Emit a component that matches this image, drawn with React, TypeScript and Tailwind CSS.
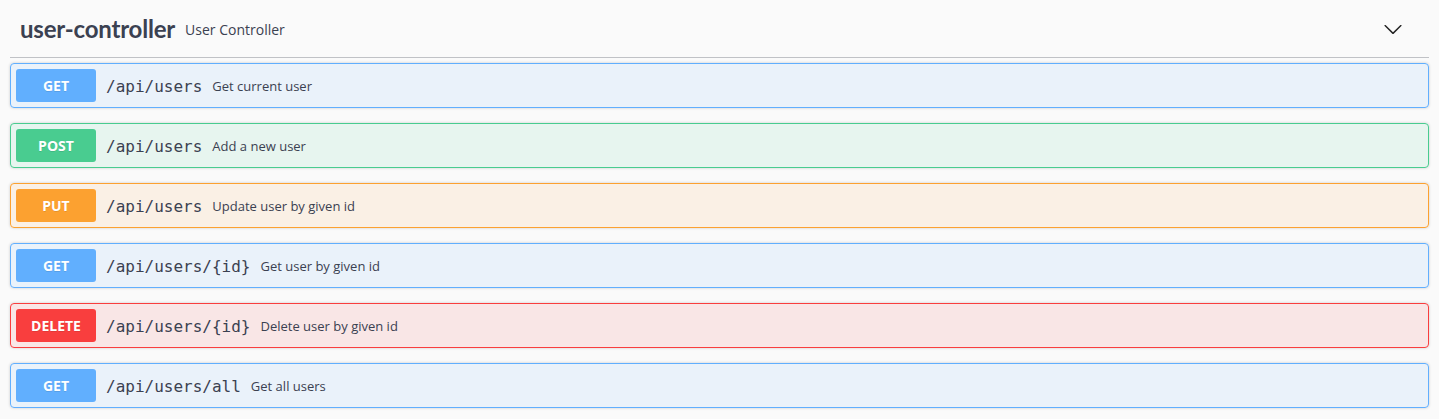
const ops = [
  { method: "GET", path: "/api/users", desc: "Get current user" },
  { method: "POST", path: "/api/users", desc: "Add a new user" },
  { method: "PUT", path: "/api/users", desc: "Update user by given id" },
  { method: "GET", path: "/api/users/{id}", desc: "Get user by given id" },
  { method: "DELETE", path: "/api/users/{id}", desc: "Delete user by given id" },
  { method: "GET", path: "/api/users/all", desc: "Get all users" },
];

const styles: Record<string, { row: string; badge: string }> = {
  GET: {
    row: "border-[#61affe] bg-[rgba(97,175,254,0.1)]",
    badge: "bg-[#61affe]",
  },
  POST: {
    row: "border-[#49cc90] bg-[rgba(73,204,144,0.1)]",
    badge: "bg-[#49cc90]",
  },
  PUT: {
    row: "border-[#fca130] bg-[rgba(252,161,48,0.1)]",
    badge: "bg-[#fca130]",
  },
  DELETE: {
    row: "border-[#f93e3e] bg-[rgba(249,62,62,0.1)]",
    badge: "bg-[#f93e3e]",
  },
};

export default function App() {
  return (
    <div className="min-h-[419px] bg-[#fafafa] px-[10px] font-['Open_Sans',sans-serif] text-[#3b4151]">
      <div className="flex h-[58px] items-center border-b border-[rgba(59,65,81,0.3)] pl-[10px] pr-[26px]">
        <span className="font-['Lato',sans-serif] text-[24px] font-bold tracking-[-0.2px]">
          user-controller
        </span>
        <span className="ml-[10px] mt-[2px] text-[14px]">User Controller</span>
        <svg
          className="ml-auto mt-[1px]"
          width="20"
          height="20"
          viewBox="0 0 20 20"
          fill="#222"
        >
          <path d="M17.418 6.109c.272-.268.709-.268.979 0s.271.701 0 .969l-7.908 7.83c-.27.268-.707.268-.979 0l-7.908-7.83c-.27-.268-.27-.701 0-.969.271-.268.709-.268.979 0L10 13.25l7.418-7.141z" />
        </svg>
      </div>

      <div className="mt-[5px] flex flex-col gap-[15px]">
        {ops.map((op, i) => (
          <div
            key={i}
            className={`flex h-[45px] items-center rounded-[4px] border px-[5px] shadow-[0_0_3px_rgba(0,0,0,0.19)] ${styles[op.method].row}`}
          >
            <span
              className={`flex h-[33px] w-[80px] items-center justify-center rounded-[3px] text-[14px] font-bold text-white [text-shadow:0_1px_0_rgba(0,0,0,0.1)] ${styles[op.method].badge}`}
            >
              {op.method}
            </span>
            <span className="mt-[2px] px-[10px] font-['DejaVu_Sans_Mono',monospace] text-[16px]">
              {op.path}
            </span>
            <span className="mt-[2px] text-[13px]">{op.desc}</span>
          </div>
        ))}
      </div>
    </div>
  );
}
